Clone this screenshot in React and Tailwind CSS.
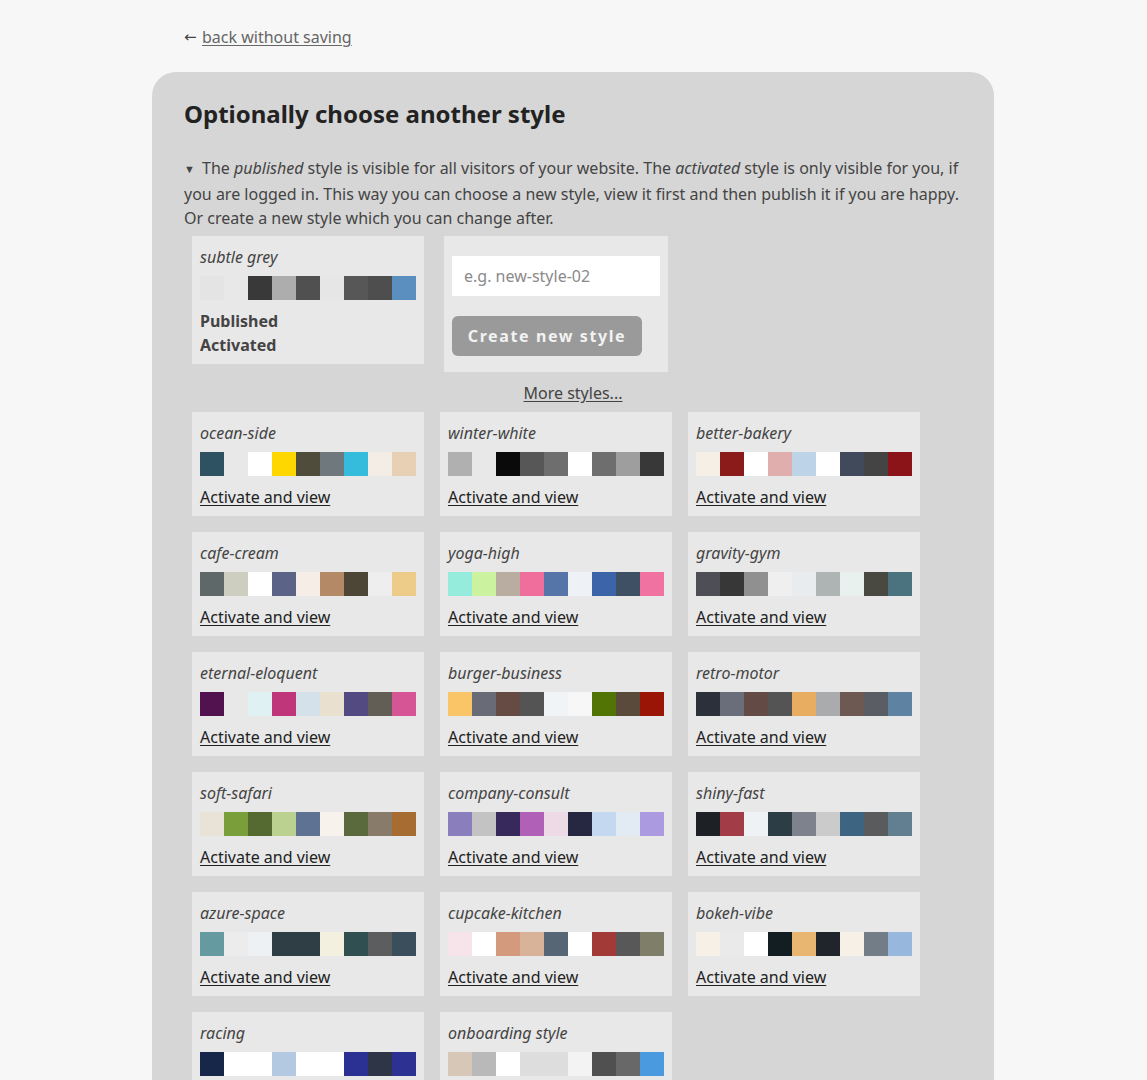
import React from "react";

const styles = [
  ["ocean-side", ["#2e5262", "#e8e8e8", "#ffffff", "#ffd700", "#4f4c3c", "#6f787d", "#35bbdb", "#f4ede6", "#e8d0b4"]],
  ["winter-white", ["#b0b0b0", "#e8e8e8", "#0a0a0a", "#575757", "#6e6e6e", "#ffffff", "#6e6e6e", "#9e9e9e", "#383838"]],
  ["better-bakery", ["#f6efe6", "#8b1a1a", "#ffffff", "#e0aeac", "#bcd3e8", "#ffffff", "#404a5a", "#444444", "#8b1418"]],
  ["cafe-cream", ["#5e6869", "#cdcdc0", "#ffffff", "#5b6387", "#f5ede6", "#b38966", "#4d4535", "#eeeeee", "#edcb88"]],
  ["yoga-high", ["#95ecdd", "#cbf39f", "#b8ada0", "#ef6e9b", "#5574a8", "#eef2f6", "#3c64a8", "#3f5064", "#f072a0"]],
  ["gravity-gym", ["#4e4e56", "#373737", "#909090", "#efefef", "#e9ecef", "#aeb4b4", "#e9f1ee", "#494942", "#4a727f"]],
  ["eternal-eloquent", ["#52124f", "#e8e8e8", "#e0f1f3", "#c0367a", "#d4e1eb", "#e9e0d0", "#524a80", "#625e56", "#d65595"]],
  ["burger-business", ["#f9c566", "#696c77", "#664a44", "#545454", "#f0f4f6", "#f7f7f7", "#527404", "#5a4a3c", "#9a1506"]],
  ["retro-motor", ["#2b303b", "#6a6e7a", "#634a44", "#545454", "#e8ad60", "#a9abac", "#6d5951", "#5a5d63", "#5e82a1"]],
  ["soft-safari", ["#e9e2d6", "#7a9f3a", "#546a30", "#bbd190", "#5e7294", "#f7f2ec", "#5a6a3c", "#887b6a", "#a76c31"]],
  ["company-consult", ["#8a7fbc", "#c3c3c3", "#38295c", "#b160b7", "#eed9e6", "#262842", "#c4d9ef", "#e2eaf3", "#ab9ae0"]],
  ["shiny-fast", ["#1d2024", "#a23d48", "#eff2f4", "#2d3d45", "#7e828c", "#cbcbcb", "#3d6582", "#5a5b5d", "#617f90"]],
  ["azure-space", ["#659aa1", "#ececec", "#eef1f3", "#2f3e45", "#2f3e45", "#f3f0e0", "#2f4f51", "#5c5d5f", "#3a4e5b"]],
  ["cupcake-kitchen", ["#f7e4eb", "#ffffff", "#d39a7e", "#d9b29a", "#576675", "#ffffff", "#a23b38", "#585858", "#7e7e69"]],
  ["bokeh-vibe", ["#f7f0e7", "#eaeaea", "#ffffff", "#131e22", "#e9b671", "#20252b", "#f7f0e7", "#737d88", "#97b7dd"]],
  ["racing", ["#16274a", "#ffffff", "#ffffff", "#b2c9e1", "#ffffff", "#ffffff", "#2b3192", "#2d3546", "#2d3192"]],
  ["onboarding style", ["#d6c7b6", "#b9b9b9", "#ffffff", "#dddddd", "#dddddd", "#f3f3f3", "#505050", "#686868", "#4a9ae0"]],
];

const subtle = ["#e4e4e4", "#e8e8e8", "#393939", "#adadad", "#505050", "#e6e6e6", "#575757", "#4e4e4e", "#5a8fbf"];

function Swatches({ colors }) {
  return (
    <div className="mt-[7px] flex h-6">
      {colors.map((c, i) => (
        <div key={i} className="h-6 w-6" style={{ backgroundColor: c }} />
      ))}
    </div>
  );
}

function Card({ name, colors }) {
  return (
    <div className="w-[232px] bg-[#e8e8e8] px-2 pt-[9px] pb-[7px]">
      <div className="font-stretch-condensed text-[16px] italic leading-6 text-[#444]">{name}</div>
      <Swatches colors={colors} />
      <div className="mt-[9px] leading-6">
        <a href="#" className="font-stretch-condensed text-[16px] text-[#222] underline underline-offset-2">
          Activate and view
        </a>
      </div>
    </div>
  );
}

export default function App() {
  return (
    <div className="min-h-screen bg-[#f7f7f7] font-['Noto_Sans',sans-serif]">
      <div className="ml-[152px] w-[842px] pt-[25px]">
        <div className="flex px-8 text-[16px] leading-6">
          <span className="inline-block w-[18px] font-['DejaVu_Sans',sans-serif] text-[15px] text-[#444]">←</span>
          <a href="#" className="text-[#666] underline underline-offset-2">
            back without saving
          </a>
        </div>
        <div className="mt-[23px] rounded-t-[24px] bg-[#d6d6d6] px-8 pt-[26px] pb-10">
          <h2 className="text-[24px] font-bold leading-8 text-[#222]">Optionally choose another style</h2>
          <p className="mt-[26px] font-stretch-condensed text-[16px] leading-[24.5px] text-[#444]">
            <span className="inline-block w-[18px] pl-0 text-[11px] align-[1px]">▼</span>
            The <em>published</em> style is visible for all visitors of your website. The <em>activated</em> style is only
            visible for you, if you are logged in. This way you can choose a new style, view it first and then publish it
            if you are happy. Or create a new style which you can change after.
          </p>
          <div className="mt-[5px] flex items-start pl-2">
            <div className="w-[232px] bg-[#e8e8e8] px-2 pt-[9px] pb-[7px]">
              <div className="font-stretch-condensed text-[16px] italic leading-6 text-[#444]">subtle grey</div>
              <Swatches colors={subtle} />
              <div className="mt-[9px] text-[16px] font-bold leading-6 text-[#444]">Published</div>
              <div className="text-[16px] font-bold leading-6 text-[#444]">Activated</div>
            </div>
            <div className="ml-5 w-[224px] bg-[#e8e8e8] px-2 pt-5 pb-4">
              <input
                className="block h-10 w-full bg-white px-3 text-[16px] text-[#333] outline-none placeholder:text-[#8a8a8a]"
                placeholder="e.g. new-style-02"
              />
              <button className="mt-5 h-10 w-[190px] rounded-[6px] bg-[#9a9a9a] text-[16px] font-bold tracking-[1.6px] text-[#f2f2f2]">
                Create new style
              </button>
            </div>
          </div>
          <div className="mt-[9px] text-center text-[16px] leading-6">
            <a href="#" className="text-[#444] underline underline-offset-2">
              More styles...
            </a>
          </div>
          <div className="mt-[7px] grid grid-cols-[232px_232px_232px] gap-4 pl-2">
            {styles.map(([n, c]) => (
              <Card key={n} name={n} colors={c} />
            ))}
          </div>
        </div>
      </div>
    </div>
  );
}
